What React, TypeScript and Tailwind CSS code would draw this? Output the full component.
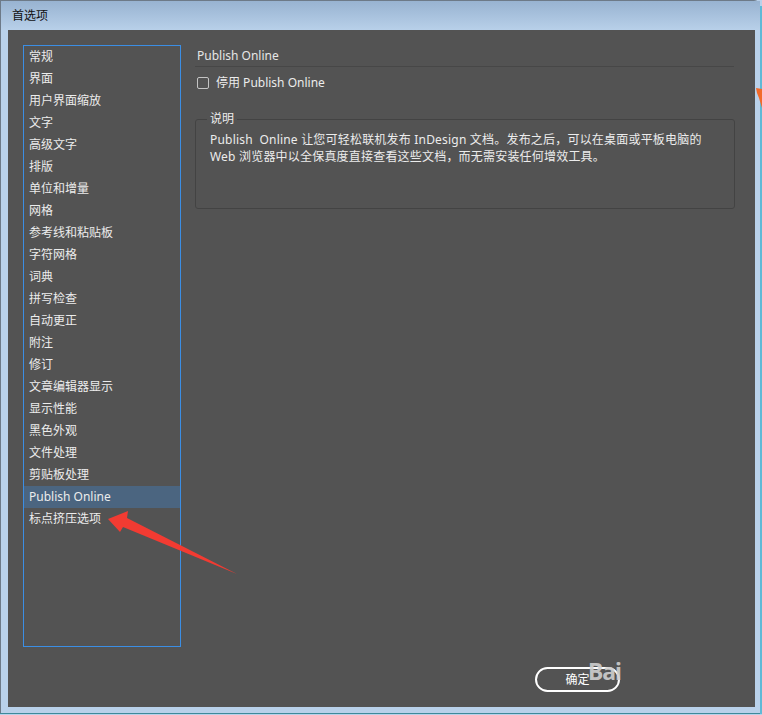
import React from "react";

const items = [
	"常规",
	"界面",
	"用户界面缩放",
	"文字",
	"高级文字",
	"排版",
	"单位和增量",
	"网格",
	"参考线和粘贴板",
	"字符网格",
	"词典",
	"拼写检查",
	"自动更正",
	"附注",
	"修订",
	"文章编辑器显示",
	"显示性能",
	"黑色外观",
	"文件处理",
	"剪贴板处理",
	"Publish Online",
	"标点挤压选项",
];

const App = () => {
	return (
		<div
			className="relative w-[762px] h-[715px] overflow-hidden bg-[#b9d1ea] text-[12px] text-[#ececec]"
			style={{ fontFamily: '"Noto Sans", "Noto Sans CJK SC", sans-serif' }}
		>
			{/* window frame */}
			<div className="flex flex-col w-[760px] h-[713px] border-t border-l border-[#6d7a88] rounded-tr-[6px] bg-[#b9d1ea]">
				{/* Title bar */}
				<div className="h-[29px] flex items-center pl-[11px] bg-gradient-to-b from-[#98b3d1] to-[#b8d0e9] text-[#111] text-[12px]">
					首选项
				</div>

				{/* Content */}
				<div className="relative flex ml-[7px] mr-[5px] h-[677px] bg-[#535353] pt-[15px] pl-[15px]">
					{/* List */}
					<div className="w-[158px] h-[602px] border border-[#3b8ee4] flex flex-col shrink-0">
						{items.map((item) => (
							<div
								key={item}
								className={`h-[22px] flex items-center pl-[5px] leading-none ${
									item === "Publish Online" ? "bg-[#4b6580]" : ""
								}`}
							>
								{item}
							</div>
						))}
					</div>

					{/* Right panel */}
					<div className="flex flex-col ml-[14px] w-[540px] h-[647px]">
						<div className="pl-[2px] h-[21px] flex items-center leading-none text-[#e6e6e6]">
							Publish Online
						</div>
						<div className="h-px bg-[#474747] mr-[1px]" />

						<div className="flex items-center gap-[7px] mt-[9px] pl-[2px] h-[14px] leading-none">
							<div className="w-[12px] h-[12px] border border-[#c4c4c4] rounded-[2px]" />
							<span>停用 Publish Online</span>
						</div>

						<div className="relative mt-[29px] mr-0 h-[90px] border border-[#434343] rounded-[3px] pl-[14px] pt-[11px]">
							<span className="absolute -top-[9px] left-[11px] px-[3px] bg-[#535353] leading-[16px]">
								说明
							</span>
							<p className="leading-[17px] tracking-[0.2px]">
								Publish&nbsp; Online 让您可轻松联机发布 InDesign 文档。发布之后，可以在桌面或平板电脑的
								<br />
								Web 浏览器中以全保真度直接查看这些文档，而无需安装任何增效工具。
							</p>
						</div>

						<div className="mt-auto ml-[340px] relative w-[85px] h-[25px] border-2 border-white rounded-full flex items-center justify-center text-white">
							确定
							<span className="absolute left-[51px] -top-[9px] text-[23px] font-bold text-[#cfcfcf] opacity-90 leading-none tracking-[-1px]">
								Bai
							</span>
						</div>
					</div>
				</div>
			</div>

			{/* bottom teal edge */}
			<div className="absolute left-0 bottom-[1px] w-[762px] h-px bg-[#3d8a9a]" />
			<div className="absolute right-0 top-[6px] w-[2px] h-[708px] bg-[#5fb9d6]" />

			{/* Orange marker at right edge */}
			<svg className="absolute left-[756px] top-[88px]" width="6" height="20" viewBox="0 0 6 20">
				<path d="M0 0 L6 1 L6 20 L3 10 L1 5 Z" fill="#f26a2a" />
			</svg>

			{/* Red arrow annotation */}
			<svg className="absolute left-0 top-0 pointer-events-none" width="762" height="715" viewBox="0 0 762 715">
				<polygon
					points="108,519 128,511 127,518 237,574 123,527 120,532"
					fill="#f23b32"
				/>
			</svg>
		</div>
	);
};

export default App;
